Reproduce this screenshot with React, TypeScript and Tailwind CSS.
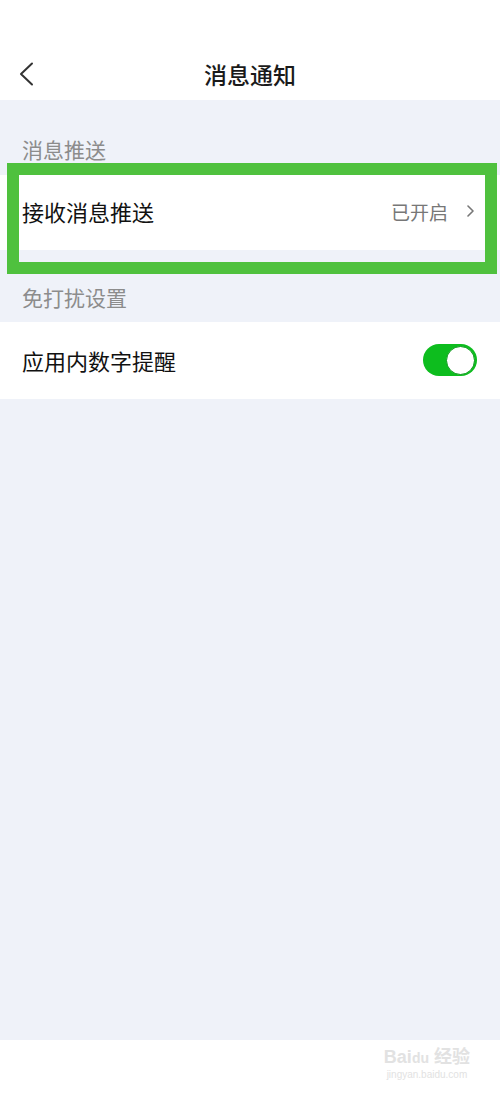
import React from "react";

export default function App() {
  const font = { fontFamily: '"Noto Sans CJK SC", "Noto Sans", sans-serif' };
  return (
    <div className="relative w-[500px] h-[1100px] bg-[#eff2f9] flex flex-col" style={font}>
      {/* Header */}
      <div className="h-[100px] bg-white flex flex-col">
        <div className="h-[50px]" />
        <div className="relative h-[50px] flex items-center justify-center pb-[2px]">
          <svg className="absolute left-[18px] top-[12px]" width="16" height="24" viewBox="0 0 16 24" fill="none">
            <path d="M14 1.5 L3 12 L14 22.5" stroke="#333" strokeWidth="2" strokeLinecap="round" strokeLinejoin="round" />
          </svg>
          <span className="text-[23px] leading-none text-[#1a1a1a] font-medium">消息通知</span>
        </div>
      </div>

      {/* Section 1 */}
      <div className="h-[75px] flex items-end pb-[15px] pl-[22px]">
        <span className="text-[21px] leading-none text-[#8c8c8c]">消息推送</span>
      </div>
      <div className="h-[75px] bg-white flex items-center pl-[22px] pr-[26px] pb-[3px]">
        <span className="text-[22px] leading-none text-[#111]">接收消息推送</span>
        <span className="ml-auto text-[19px] leading-none text-[#777]">已开启</span>
        <svg className="ml-[19px]" width="7" height="12" viewBox="0 0 7 12" fill="none">
          <path d="M1 1 L6 6 L1 11" stroke="#777" strokeWidth="1.6" strokeLinecap="round" strokeLinejoin="round" />
        </svg>
      </div>

      {/* Section 2 */}
      <div className="h-[72px] flex items-end pb-[14px] pl-[22px]">
        <span className="text-[21px] leading-none text-[#8c8c8c]">免打扰设置</span>
      </div>
      <div className="h-[77px] bg-white flex items-center pl-[22px] pr-[23px] pb-[1px]">
        <span className="text-[22px] leading-none text-[#111]">应用内数字提醒</span>
        <div className="ml-auto w-[54px] h-[32px] rounded-full bg-[#0dbd1e] flex items-center justify-end p-[2px]">
          <div className="w-[29px] h-[29px] rounded-full bg-white border-[1.5px] border-[#0a9a1a]" />
        </div>
      </div>

      <div className="flex-1" />

      {/* Bottom bar */}
      <div className="h-[60px] bg-white flex justify-end pr-[30px] pt-[8px]">
        <div className="flex flex-col items-center text-[#e2e2e2] leading-none">
          <span className="text-[18px] font-bold" style={{ fontFamily: '"Liberation Sans", "Noto Sans CJK SC", sans-serif' }}>Bai<span className="text-[14px]">du</span> 经验</span>
          <span className="text-[10px] mt-[4px]" style={{ fontFamily: '"Liberation Sans", sans-serif' }}>jingyan.baidu.com</span>
        </div>
      </div>

      {/* Annotation frame */}
      <div className="absolute left-[7px] top-[163px] w-[490px] h-[111px] border-[12px] border-[#4fc13e]" />
    </div>
  );
}
